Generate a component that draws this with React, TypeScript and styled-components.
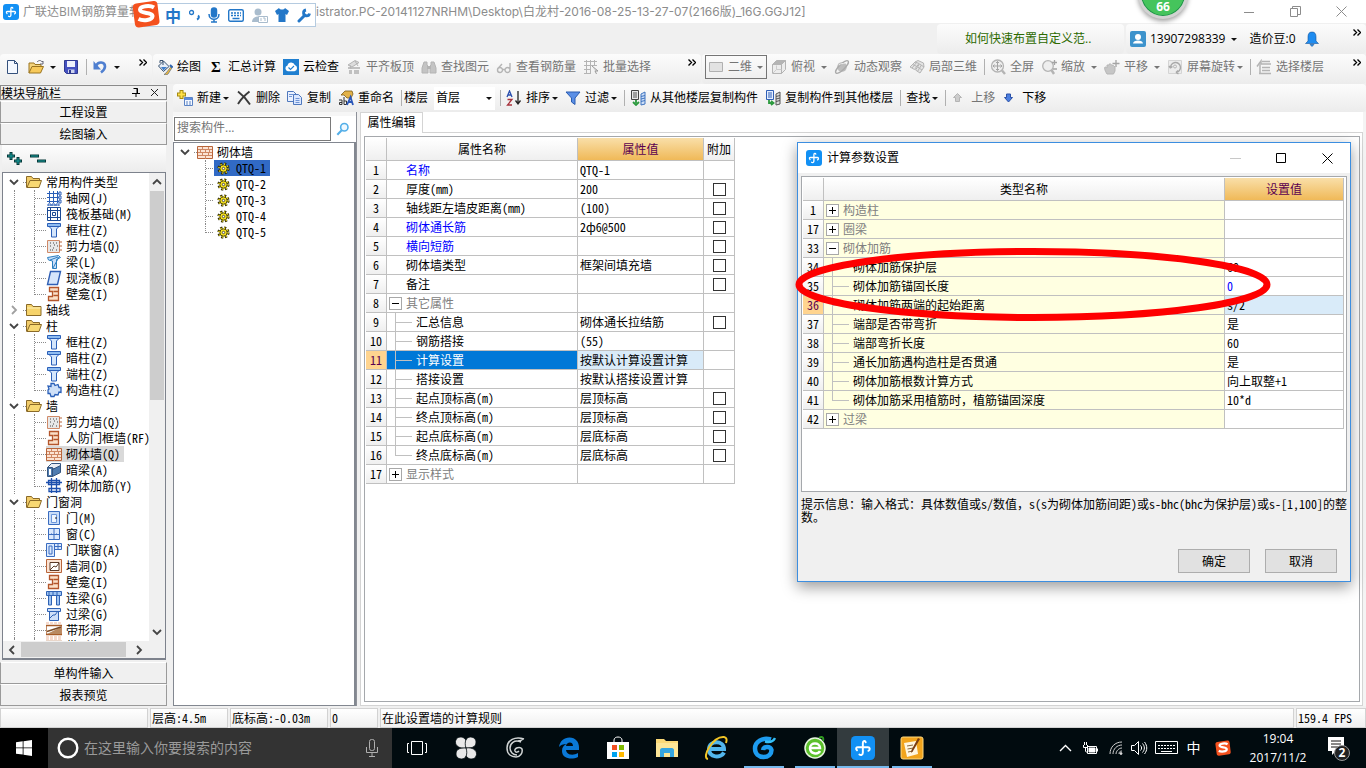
import React from 'react';
import styled, { createGlobalStyle, css } from 'styled-components';

const UI_FONT = '"Open Sans", "Noto Sans CJK SC", sans-serif';
const SONG_FONT = '"Noto Sans CJK SC", sans-serif';

const GlobalStyle = createGlobalStyle`
  *, *::before, *::after { box-sizing: border-box; }
  body { margin: 0; background: #f0f0f0; font-family: ${SONG_FONT}; font-size: 12px; line-height: 16px; color: #000; font-feature-settings: "hwid" 1; }
  button, input, select { font: inherit; font-feature-settings: inherit; color: inherit; margin: 0; padding: 0; border: 0; background: none; border-radius: 0; }
  svg { display: block; flex: none; }
`;

/* ---------- icons ---------- */

const Svg = ({ size = 16, children }: { size?: number; children: React.ReactNode }) => (
  <svg width={size} height={size} viewBox="0 0 16 16" fill="none" aria-hidden="true">{children}</svg>
);

const blueLine = '#2a5fb8';
const orange = '#b8653a';
const grey = '#b4b4b4';

const icons: Record<string, React.ReactNode> = {
  app: (
    <>
      <rect width="16" height="16" rx="3" fill="#1290f4" />
      <path d="M9.800 4.200C9.500 3 7.900 3 7.900 4.700v6.300c0 1.600-1.300 2-2.300 1.300M4 9.500C2.800 8.200 3.500 7.300 5 7.500h6c1.700-.2 2 1.700.6 2.400" stroke="#fff" strokeWidth="1.300" strokeLinecap="round" />
    </>
  ),
  newFile: (
    <>
      <path d="M2.500 1.500h7l3 3v10h-10z" fill="#f4f8ff" stroke="#34507c" />
      <path d="M9.500 1.500v3h3" stroke="#34507c" />
    </>
  ),
  open: (
    <>
      <path d="M1 14V4h5l1 1.500h6V8" fill="#f4d37c" stroke="#9a7420" />
      <path d="M1 14 4 7.500h11.500L12.500 14z" fill="#f7c95a" stroke="#9a7420" />
      <path d="M9 3c2-2 4-2 5 0l1-1v3h-3" stroke="#667" />
    </>
  ),
  save: (
    <>
      <path d="M1.500 1.500h13v13h-11l-2-2z" fill="#4450c0" stroke="#303a90" />
      <path d="M4 2h8v6H4z" fill="#eef0fb" />
      <path d="M5 10.500h6.500V14H5z" fill="#cdd3ee" />
      <path d="M6 11h2v3H6z" fill="#303a90" />
    </>
  ),
  undo: (
    <>
      <path d="M4 7c2-5 9-4.500 9 .5 0 3-2 4.500-4 6" stroke="#4f7fd0" strokeWidth="2.600" />
      <path d="M1.500 2v8.500H9z" fill="#4f7fd0" />
    </>
  ),
  paint: (
    <>
      <path d="m1.500 7 5-5 5.500 5.500-5.500 5z" fill="#e6eef8" stroke="#37506e" />
      <path d="M4 8h6l-3.500 3.500z" fill="#3f7fcc" />
      <path d="M3 4V1.500h3V6" stroke="#37506e" />
      <path d="m9 14 5.500-7 1 1L11 15c-1 1-3 1-4 .5z" fill="#efb93a" stroke="#5a6a80" strokeWidth=".7" />
      <path d="m13 6 2.500 2.500" stroke="#2b62b0" strokeWidth="2" />
    </>
  ),
  cloud: (
    <>
      <rect width="16" height="16" fill="#1f7fd0" />
      <path d="M4.800 12.200a3 3 0 0 1-.3-5.800A3.800 3.800 0 0 1 11.800 6a3.200 3.200 0 0 1-.3 6.200z" fill="#fff" />
      <path d="m5.500 8.500 2 2 3.500-3.500" stroke="#1f7fd0" strokeWidth="1.100" />
    </>
  ),
  slab: (
    <>
      <path d="m2 6 7-4.500 4 2L6 8z" fill="#ddd" stroke={grey} />
      <path d="M2 8h12v2H2zM3 11h3v4H3zM8 11h5v4H8z" fill="#c0c0c0" />
      <path d="m9 2 3 5M4 6l1 4" stroke={grey} />
    </>
  ),
  binoculars: (
    <>
      <path d="M3 3h3v3l1 1v7H1V9zM10 3h3l2 6v5H9V7l1-1z" fill="#c4c4c4" stroke={grey} />
      <path d="M6 7h4v3H6z" fill={grey} />
    </>
  ),
  glasses: (
    <path d="M1.500 11a2.500 2.500 0 1 0 5 0 2.500 2.500 0 1 0-5 0M9 11a2.500 2.500 0 1 0 5 0 2.500 2.500 0 1 0-5 0M6.500 10.500H9M1.500 10 6 5M14 10V4" stroke={grey} strokeWidth="1.400" />
  ),
  batch: (
    <>
      <path d="M1 2.500h13M1 6.500h13M1 10.500h7M1 14.500h7M3.500 1v14M7.500 1v14M11.500 1v6" stroke={grey} />
      <path d="m9 7 6 5h-3l1.500 3" fill="#ddd" stroke="#999" />
    </>
  ),
  flat: <path d="M1.500 3.500h13v9h-13z" fill="#e2e2e2" stroke="#b0b0b0" />,
  cube: (
    <>
      <path d="M1.500 5.500h9v9h-9zM10.500 5.500l4-4v9l-4 4z" fill="#ececec" stroke={grey} />
      <path d="M10.500 5.500h-9l4-4h9z" fill="#b4b4b4" stroke={grey} />
      <path d="M5.500 10.500v-4M5.500 10.500l-4 4M5.500 10.500h5" stroke="#ccc" />
    </>
  ),
  orbit: (
    <>
      <circle cx="8" cy="8" r="4.800" fill="#bdbdbd" />
      <ellipse cx="8" cy="8" rx="8.500" ry="2.800" transform="rotate(-45 8 8)" stroke="#aaa" strokeWidth="1.300" />
      <path d="M5 6c2-2 4-1 6-2" stroke="#eee" />
    </>
  ),
  local3d: (
    <>
      <path d="m1 8 5-5 4 1.500-4.500 6zM6.500 11l4-6 4.500 3-4 6zM6 3l3-1.500L14.500 4 15 8" fill="#e4e4e4" stroke={grey} />
      <path d="M3.500 5.500 8 7.500M8.500 8l4.500 3M8 3l-5 6M12.500 6l-4 6.500" stroke={grey} />
    </>
  ),
  fit: (
    <>
      <circle cx="7.500" cy="7" r="6" fill="#eee" stroke={grey} strokeWidth="1.300" />
      <path d="M7.500 2.500v9M3 7h9M6 4l1.500-1.500L9 4M6 10l1.500 1.500L9 10M4.500 5.500 3 7l1.500 1.500M10.500 5.500 12 7l-1.500 1.500" stroke="#a4a4a4" />
      <path d="m12 11.500 3 3.500" stroke={grey} strokeWidth="2.400" />
    </>
  ),
  zoom: (
    <>
      <circle cx="7" cy="7" r="5.300" fill="#eee" stroke={grey} strokeWidth="1.300" />
      <path d="m10.500 11 2.500 4" stroke={grey} strokeWidth="2.400" />
      <path d="M13.500 1v5M11 3.500h5M12 10h4" stroke="#a4a4a4" strokeWidth="1.300" />
    </>
  ),
  pan: (
    <>
      <path d="M3 15c-2-3-3-6-2-7 1 0 2 1 2 1V6h2l1-1.500 1.500 1.500 2 .5L11 8v4l-1.500 3z" fill="#c6c6c6" stroke="#b6b6b6" />
      <path d="M12 1v7M8.500 4.500h7" stroke="#a4a4a4" strokeWidth="1.300" />
    </>
  ),
  rotate: (
    <>
      <path d="M1.500 1.500h13v13h-13z" fill="#ececec" stroke="#d4d4d4" />
      <path d="M3.500 9a5 5 0 1 1 5.500 4.500M9 13.500l2-2M9 13.500l2.500 1.500M3.500 9 2 7M3.500 9l2-1.500" stroke="#a8a8a8" strokeWidth="1.400" />
      <circle cx="8" cy="7.500" r="1.500" stroke={grey} />
    </>
  ),
  floors: (
    <>
      <path d="M1 7.500 5 2v3h10M4 5.500V14" stroke={grey} strokeWidth="1.500" />
      <path d="M6 2.500h8M6 8.500h8M6 11.500h8M3 14.500h12" stroke={grey} strokeWidth="1.500" />
    </>
  ),
  create: (
    <>
      <path d="M4.500 0v9M0 4.500h9" stroke="#a58a10" strokeWidth="4" />
      <path d="M4.500 1v7M1 4.500h7" stroke="#ffe04a" strokeWidth="2" />
      <path d="M7.500 7.500h8v8h-8z" fill="#f4f8ff" stroke="#5b83c4" />
      <path d="M8 8h7v2H8z" fill="#5b8be0" />
      <path d="M9 12h2M12 12h2M9 14h2M12 14h2" stroke="#5b83c4" />
    </>
  ),
  remove: <path d="M2 1.500c4 3 8 7 12 13M13.500 1.500C9 5 5 9 2 14" stroke="#3a3a3a" strokeWidth="1.900" />,
  copy: (
    <>
      <path d="M.5 1.500h6l3 3v7h-9z" fill="#eaf1ff" stroke="#4f78bd" />
      <path d="M6.500 4.500h5l3 3v7h-8z" fill="#dbe7ff" stroke="#4f78bd" />
      <path d="M2 4.500h4M2 6.500h3M8.500 8.500h4M8.500 10.500h4M8.500 12.500h4" stroke="#6f94d4" />
    </>
  ),
  rename: (
    <>
      <path d="M3 5 7 1h7l1 3-2 4H9L6 5z" fill="#e2b24a" stroke="#7b5a18" strokeWidth=".8" />
      <path d="M1 10h3v4.500H1.500v-2H4M6 7v7.500h2.500V11H6" stroke="#333" />
      <path d="m9 15 3.500-8 2.500 8M10.500 12h4" stroke="#2a56b8" strokeWidth="1.800" />
    </>
  ),
  sort: (
    <>
      <path d="M1 7 3.500 1 6 7M2 5h3" stroke="#2a4fae" strokeWidth="1.300" />
      <path d="M1.500 9.500h4.500L1.500 15H6" stroke="#a8323c" strokeWidth="1.300" />
      <path d="M12 1v12M9.500 10.500 12 14l2.500-3.500" stroke="#222" strokeWidth="1.300" />
    </>
  ),
  filter: <path d="M1 2h14L10 8v6.500L6.500 12V8z" fill="#5b8fe6" stroke="#2a5cb0" />,
  fromFloor: (
    <>
      <path d="M1.500.5h7v9h-7z" fill="#e8e8e8" stroke="#444" />
      <path d="M3 3h4M3 5h4M3 7h4" stroke="#555" />
      <path d="M6 10v3M3 12l3 3 3-3" stroke="#2c9a3e" strokeWidth="1.800" />
      <path d="m11 4 4-2v12l-4 1zM11 6.500l4-1M11 9l4-1M11 11.500l4-1" fill="#cfe0f8" stroke="#3f74c0" />
    </>
  ),
  toFloor: (
    <>
      <path d="M1.500.5h7v9h-7z" fill="#e4eeff" stroke="#2f5fb5" />
      <path d="M3 3h4M3 5h4M3 7h4" stroke="#2f5fb5" />
      <path d="M4 10v3h4M6 11l2.500 2L6 15" stroke="#2c9a3e" strokeWidth="1.800" />
      <path d="m11 4 4-2v12l-4 1zM11 6.500l4-1M11 9l4-1M11 11.500l4-1" fill="#ddd" stroke="#555" />
    </>
  ),
  up: <path d="m6.500 3.500 4 4H8.500v4h-4v-4h-2z" fill="#ccc" stroke="#b4b4b4" />,
  down: <path d="m6.500 12 4-4.500H8.500V4h-4v3.500h-2z" fill="#4c7fe0" stroke="#2b51a8" />,
  user: (
    <>
      <rect width="16" height="16" rx="2" fill="#3d93cc" />
      <circle cx="8" cy="6" r="3" fill="#fff" />
      <path d="M3 12.500c0-4 10-4 10 0z" fill="#fff" />
    </>
  ),
  bell: <path d="M8 1c3 0 4 2 4 5v4l2.500 2.500h-13L4 10V6c0-3 1-5 4-5zM6 13.500h4L8 15.500z" fill="#1e8cf0" stroke="#16569c" strokeWidth=".6" />,
  folder: (
    <>
      <path d="M.5 13.500v-11h5l1.500 2h6.500V7" fill="#f2cc6a" stroke="#8a6a28" />
      <path d="M1 13.500 4 6.500h11.500L13 13.500z" fill="#f8d873" stroke="#8a6a28" />
    </>
  ),
  folderShut: (
    <>
      <path d="M.5 13.500v-11h5l1.500 2h8v9z" fill="#f6d36b" stroke="#8a6a28" />
      <path d="M1 6h13.500" stroke="#fdf0b8" />
    </>
  ),
  axis: <path d="M3.500 1v12M7.500 1v12M11.500 1v12M1 3.500h12M1 7.500h12M1 11.500h12M13 2h2v3h-2zM13 6h2v3h-2zM13 10h2v3h-2zM2 14h3v2H2zM6 14h3v2H6zM10 14h3v2h-3z" stroke={blueLine} />,
  raft: <path d="M1.500 1.500h13v13h-13zM4.500 4.500h7v7h-7zM4.500 1.500v13M11.500 1.500v13M1.500 4.500h13M1.500 11.500h13M6.500 6.500h3v3h-3z" stroke="#1c4a94" />,
  column: (
    <>
      <path d="M1.500 1.500h13v3h-13z" fill="#8fbcf0" stroke={blueLine} />
      <path d="M3 4.500h10L10.500 7v8h-5V7z" fill="#d4e6fc" stroke={blueLine} />
    </>
  ),
  shearWall: (
    <>
      <path d="M1.500 2.500h12v12h-12z" fill="#e8e8e8" stroke="#d08a68" />
      <path d="M4 12h1M7 10h1M10 12h1M4 8h1M8 7h1M11 8h1M4 5h1M6 12h1M10 5h1M7 5h1" stroke="#444" />
      <path d="M13 4h3M13 8h3M13 12h3" stroke={orange} />
    </>
  ),
  beam: (
    <>
      <path d="m1.500 3.500 11-2 2 2-4 2v9h-4V7l-4-1z" fill="#c9defa" stroke="#2b7fc0" />
      <path d="m7 14 6-11M4 6l8-3" stroke="#2b7fc0" />
    </>
  ),
  slabBlue: <path d="M4.500 1.500h10l-3 13h-10z" fill="#d6e6fb" stroke="#2f5fb5" strokeWidth="1.400" />,
  niche: <path d="M3.500 1.500h9v13h-10v-4h4v-5h-3zM7.500 5.500h5M7.500 9.500h5" fill="#fbe0c8" stroke="#b4562c" strokeWidth="1.300" />,
  structColumn: <path d="M5 1.500h3l1 2 3-1 1 3h2v5l-2-.5-1 3-3-.5-1 2H5l-1-3H2V8l1-1-1-3 3 .5z" fill="#cfe0f8" stroke={blueLine} strokeWidth="1.300" />,
  brick: (
    <>
      <path d="M.5 2.500h15v12H.5z" fill="#fbe3d3" stroke={orange} />
      <path d="M1 5.500h14M1 8.500h14M1 11.500h14M5.500 3v3M11.500 3v3M8.500 6v3M3.500 6v3M12.500 6v3M5.500 9v3M11.500 9v3M8.500 12v3" stroke="#cf8763" />
    </>
  ),
  hiddenBeam: (
    <>
      <path d="m1.500 5.500 4-4h9v3l-4 3z" fill="#e9eef5" stroke="#34557f" />
      <path d="M1.500 5.500h5v9h-5zM6.500 7.500l8-4v7l-8 4z" fill="#4f7cb0" stroke="#34557f" />
      <path d="M3 7h2v6H3z" fill="#fff" />
    </>
  ),
  rebar: <path d="M2.500 2.500h11v4h-11zM0 4.500h16M5.500 0v15M10.500 0v15M3 10.500h11v3H3z" stroke="#1c4fae" strokeWidth="1.300" />,
  door: (
    <>
      <path d="M2.500 1.500h11v13h-11z" fill="#c9ddf8" stroke="#3a6cc0" />
      <path d="M5.500 4.500h5v8h-5z" fill="#eef5ff" stroke="#6d97da" />
      <path d="M9 8h2" stroke="#222" />
    </>
  ),
  window: (
    <>
      <path d="M2.500 2.500h11v11h-11z" fill="#dbe9fd" stroke="#3a6cc0" />
      <path d="M8 2.500v11M2.500 8.500h11M5 8h1M10 8h1" stroke="#3a6cc0" />
    </>
  ),
  doorWindow: <path d="M.5 1.500h8v13h-8zM3 4h3v8H3zM8.500 1.500h7v6h-7zM12 1.500v6M8.500 4.500h7" fill="#dbe9fd" stroke="#3a6cc0" />,
  wallHole: (
    <>
      <path d="M.5 1.500h15v13H.5z" fill="#fbe3d3" stroke={orange} />
      <path d="M4 4.500h9v8H4z" fill="#fff" stroke="#5a3a28" />
      <path d="m4 12 4-4 2 1 3-4" stroke="#5a3a28" />
    </>
  ),
  linkBeam: <path d="M.5 1.500h15v4H.5zM2.500 6v9h3V6M10.500 6v9h3V6M3 1.500v4M7 1.500v4M11 1.500v4" fill="#9dc3f2" stroke="#2f62b4" />,
  lintel: <path d="M1.500 2.500h13v3h-13zM3.500 6v8.500h9V6M4 12l3-3 2 0 3-4" fill="#cfe0f8" stroke="#2f62b4" />,
  stripHole: (
    <>
      <path d="M0 3.500h16v9H0z" fill="#fff" stroke="#a85c28" strokeWidth="1.400" />
      <path d="M1 12 15 5v7z" fill="#b98a62" />
      <path d="M1 9.500 15 5" stroke="#7a4a24" strokeWidth="1.500" />
      <path d="M0 1h16M0 15h16" stroke="#ecb49a" strokeDasharray="3 1" />
    </>
  ),
  gear: (
    <>
      <circle cx="8" cy="8" r="5.500" stroke="#2e2900" strokeWidth="4" strokeDasharray="2.400 1.920" />
      <circle cx="8" cy="8" r="4.500" fill="#f6e21e" stroke="#2e2900" />
      <circle cx="8" cy="8" r="5.600" stroke="#f6e21e" strokeWidth="1.800" strokeDasharray="1.400 2.998" />
      <circle cx="8" cy="8" r="1.500" fill="#fff" stroke="#333" />
    </>
  ),
  search: (
    <>
      <circle cx="9.500" cy="6" r="4.200" fill="#eef8ff" stroke="#52aee8" strokeWidth="1.800" />
      <path d="m6.500 9.500-5 5" stroke="#52aee8" strokeWidth="2.400" />
    </>
  ),
};

const Icon = ({ name, size }: { name: string; size?: number }) => <Svg size={size}>{icons[name]}</Svg>;

const Caret = ({ color = '#111' }: { color?: string }) => (
  <svg width="6" height="3" viewBox="0 0 6 3" aria-hidden="true"><path d="M0 0h6L3 3z" fill={color} /></svg>
);

const Chevron = ({ dir = 'down', color = '#444' }: { dir?: 'down' | 'right' | 'up' | 'left'; color?: string }) => {
  const d = { down: 'M1 3l4 4 4-4', up: 'M1 7l4-4 4 4', right: 'M3 1l4 4-4 4', left: 'M7 1 3 5l4 4' }[dir];
  return <svg width="10" height="10" viewBox="0 0 10 10" fill="none" aria-hidden="true"><path d={d} stroke={color} strokeWidth="1.800" /></svg>;
};

/* Half-width Latin is on for the whole page; these signs keep their full em. */
const FullWidth = styled.span`font-feature-settings: normal;`;
const Song = ({ text }: { text: string }) => (
  <>{text.split(/([，ф])/).map((part, i) => (i % 2 ? <FullWidth key={i}>{part}</FullWidth> : part))}</>
);

/* ---------- window frame ---------- */

const Screen = styled.div`
  display: flex; flex-direction: column; height: 100vh; overflow: hidden; position: relative;
`;

const TitleBar = styled.header`
  display: flex; align-items: center; flex: none; height: 23px; padding: 0 2px 0 3px;
  background: #fff; font-family: ${UI_FONT}; color: #8c8c8c; white-space: nowrap;
`;
const TitleLead = styled.span`width: 290px; flex: none; padding-left: 4px; overflow: hidden;`;
const TitlePath = styled.span`flex: 1; font-family: Inter, "Noto Sans CJK SC", sans-serif;`;
const WindowButton = styled.button<{ $w?: number }>`
  width: ${p => p.$w ?? 46}px; height: 22px; display: flex; align-items: center; justify-content: center;
`;

const ImeBar = styled.div`
  position: absolute; z-index: 2; left: 144px; top: 3px; width: 172px; height: 24px; padding: 0 4px 0 20px;
  display: flex; align-items: center; justify-content: space-between;
  background: #fff; border: 1px solid #b5cbe0; color: #2377c8; font: bold 16px/20px ${SONG_FONT};
`;
const ImeLogo = styled.div`position: absolute; left: -13px; top: -4px;`;
const Ball = styled.div`
  position: absolute; z-index: 2; left: 1138px; top: -31px; width: 50px; height: 50px; border-radius: 50%;
  border: 3px solid #d2d2d2; background: #45c45c; box-shadow: inset 0 0 0 1px #1d8f4a, 0 2px 5px #0006;
  display: flex; align-items: flex-end; justify-content: center; padding-bottom: 2px;
  color: #fff; font: bold 12px/14px ${UI_FONT};
`;

/* ---------- toolbars ---------- */

const band = css`
  display: flex; align-items: center; background: linear-gradient(#fcfcfc, #ececec); border-radius: 4px; white-space: nowrap;
`;
const MenuRow = styled.div`display: flex; flex: none; justify-content: flex-end; gap: 2px; height: 31px; padding-top: 1px; font-family: ${UI_FONT};`;
const TipBand = styled.div`${band} width: 187px; padding-left: 28px;`;
const TipLink = styled.a`color: #2d6a00; text-decoration: none;`;
const AccountBand = styled.div`${band} width: 240px; padding: 0 5px 0 4px; gap: 12px;`;
const PlainButton = styled.button<{ $gap?: number }>`display: flex; align-items: center; gap: ${p => p.$gap ?? 4}px; white-space: nowrap;`;
const ToolRow = styled.div`display: flex; flex: none; gap: 1px; height: 30px; font-family: ${UI_FONT};`;
const Band = styled.div<{ $w?: number; $left: number }>`
  ${band} ${p => (p.$w ? `width: ${p.$w}px;` : 'flex: 1;')} padding: 0 5px 4px ${p => p.$left}px;
`;
const EditBar = styled.div`${band} flex: none; height: 28px; padding-left: 4px; font-family: ${UI_FONT};`;
const ToolButton = styled.button<{ $off?: boolean }>`
  display: flex; align-items: center; gap: 4px; padding-right: 7px; white-space: nowrap; color: ${p => (p.$off ? '#757575' : '#000')};
`;
const CaretSlot = styled.span<{ $wide?: boolean }>`margin-left: ${p => (p.$wide ? 2 : -2)}px;`;
const Rule = styled.span`width: 1px; height: 16px; margin-right: 5px; background: #b0b0b0;`;
const MoreButton = styled.button`align-self: flex-start; margin-left: auto; padding-top: 5px;`;
const Sigma = styled.span`width: 16px; text-align: center; font: bold 15px/16px "Liberation Serif", serif;`;
const ViewPicker = styled.label`
  display: flex; align-items: center; gap: 4px; width: 62px; height: 24px; margin-right: 4px; padding: 0 3px 0 2px;
  border: 1px solid #757575; color: #757575;
`;
const FloorLabel = styled.span`border-left: 1px solid #b0b0b0; padding-left: 2px;`;
const FloorPicker = styled.label`
  display: flex; align-items: center; width: 61px; height: 23px; margin: 0 5px 0 6px; padding: 0 3px 0 2px; background: #fff;
`;
const BareSelect = styled.select`appearance: none; flex: 1; width: 20px; outline: none;`;

const More = () => (
  <MoreButton aria-label="更多">
    <svg width="8" height="7" fill="none" stroke="#000"><path d="m.5.5 3 3-3 3M4.500.5l3 3-3 3" strokeWidth="1.400" /></svg>
  </MoreButton>
);

type ToolProps = { icon?: string; sigma?: boolean; label?: string; off?: boolean; drop?: 'menu' | 'split' };
const Tool = ({ icon, sigma, label, off, drop }: ToolProps) => (
  <ToolButton $off={off} aria-label={label ?? icon}>
    {sigma && <Sigma>Σ</Sigma>}
    {icon && <Icon name={icon} />}
    {label && <span>{label}</span>}
    {drop && <CaretSlot $wide={drop === 'split'}><Caret color={off ? '#757575' : '#111'} /></CaretSlot>}
  </ToolButton>
);

/* ---------- main area ---------- */

const Main = styled.div`display: flex; flex: 1; min-height: 0; gap: 5px;`;
const Sidebar = styled.aside`display: flex; flex-direction: column; width: 167px; flex: none; padding: 1px 0 2px;`;
const DockTitle = styled.div`
  display: flex; align-items: center; height: 15px; margin-bottom: 1px; padding-right: 3px; border: 1px solid #8a8a8a;
  & > span { flex: 1; }
`;
const NavButton = styled.button`height: 22px; flex: none; background: #f0f0f0; border: 1px solid #9a9a9a; border-top-color: #fff; text-align: center;`;
const TreeTools = styled.div`
  display: flex; gap: 6px; align-items: center; flex: none; height: 27px; margin: 0 1px 0 2px; padding-left: 4px;
  background: linear-gradient(#fdfdfd, #ececec);
`;
const TreeFrame = styled.div`
  display: flex; flex-direction: column; flex: 1; min-height: 0; margin: 0 1px 2px 2px; background: #fff; border: 1px solid #7d828c;
  border-bottom-width: 2px;
`;
const TreeBody = styled.div`display: flex; flex: 1; min-height: 0;`;
const TreeList = styled.ul`flex: 1; min-width: 0; margin: 0; padding: 1px 0 0; list-style: none; overflow: hidden;`;
const TreeRow = styled.li`display: flex; align-items: center; height: 16px; white-space: nowrap;`;
const Twisty = styled.button`width: 20px; padding-left: 6px; height: 16px;`;
const dot = '#8a8a8a';
const GroupDash = styled.span`width: 3px; border-top: 1px dotted ${dot};`;
const GroupLabel = styled.span`padding-left: 4px;`;
const Rails = styled.span<{ $end?: boolean }>`
  display: flex; flex: none; align-self: stretch; width: 43px;
  &::before { content: ""; width: 20px; margin-left: 11px; border-left: 1px dotted ${dot}; }
  &::after { content: ""; flex: 1; height: ${p => (p.$end ? 9 : 16)}px; border-left: 1px dotted ${dot};
    background: repeating-linear-gradient(90deg, ${dot} 0 1px, transparent 1px 2px) 0 8px / 100% 1px no-repeat; }
`;
const LeafLabel = styled.span<{ $on?: boolean }>`
  display: flex; align-items: center; gap: 4px; height: 16px; padding-right: 4px; background: ${p => (p.$on ? '#d9d9d9' : 'none')};
`;
const ScrollTrack = styled.div<{ $v?: boolean }>`
  display: flex; flex: none; align-items: center; background: #f0f0f0; flex-direction: ${p => (p.$v ? 'column' : 'row')};
  ${p => (p.$v ? 'width: 16px; padding: 4px 0;' : 'height: 17px; padding: 0 18px 0 4px;')}
`;
const ScrollThumb = styled.div<{ $v?: boolean }>`
  background: #cdcdcd; ${p => (p.$v ? 'width: 14px; height: 209px; margin-top: 4px;' : 'height: 15px; width: 105px; margin: 0 8px 0 4px;')}
`;
const Spacer = styled.span`flex: 1;`;

type Group = { name: string; shut?: boolean; items: [string, string][] };
const groups: Group[] = [
  { name: '常用构件类型', items: [['axis', '轴网(J)'], ['raft', '筏板基础(M)'], ['column', '框柱(Z)'], ['shearWall', '剪力墙(Q)'], ['beam', '梁(L)'], ['slabBlue', '现浇板(B)'], ['niche', '壁龛(I)']] },
  { name: '轴线', shut: true, items: [] },
  { name: '柱', items: [['column', '框柱(Z)'], ['column', '暗柱(Z)'], ['column', '端柱(Z)'], ['structColumn', '构造柱(Z)']] },
  { name: '墙', items: [['shearWall', '剪力墙(Q)'], ['niche', '人防门框墙(RF)'], ['brick', '砌体墙(Q)'], ['hiddenBeam', '暗梁(A)'], ['rebar', '砌体加筋(Y)']] },
  { name: '门窗洞', items: [['door', '门(M)'], ['window', '窗(C)'], ['doorWindow', '门联窗(A)'], ['wallHole', '墙洞(D)'], ['niche', '壁龛(I)'], ['linkBeam', '连梁(G)'], ['lintel', '过梁(G)'], ['stripHole', '带形洞'], ['stripHole', '带形窗']] },
];

const Work = styled.div`display: flex; flex-direction: column; flex: 1; min-width: 0; padding: 0 0 2px 1px;`;
const Panes = styled.div`display: flex; flex: 1; min-height: 0; gap: 3px;`;
const ComponentPane = styled.section`display: flex; flex-direction: column; flex: none; width: 184px; padding-top: 4px; border-right: 1px solid #8d9098; background: #f6f6f6;`;
const SearchRow = styled.div`display: flex; height: 26px; background: #fff; padding: 1px;`;
const SearchBox = styled.input`
  width: 157px; height: 24px; padding: 0 2px 4px; border: 1px solid #7a7a7a; background: #fff;
  font-family: ${UI_FONT}; outline: none;
  &::placeholder { color: #757575; opacity: 1; }
`;
const SearchButton = styled.button`display: flex; flex: 1; align-items: center; justify-content: center;`;
const ComponentTree = styled.ul`flex: 1; margin: 0; padding: 1px 0 0; list-style: none; background: #fff; border: 1px solid #828790; border-right-width: 2px;`;
const ComponentRails = styled.span<{ $end?: boolean }>`
  flex: none; align-self: flex-start; width: 9px; margin-left: 31px; height: ${p => (p.$end ? 9 : 16)}px; border-left: 1px dotted ${dot};
  background: repeating-linear-gradient(90deg, ${dot} 0 1px, transparent 1px 2px) 0 8px / 100% 1px no-repeat;
`;
const ComponentName = styled.span<{ $on?: boolean }>`
  display: flex; align-items: center; gap: 6px; height: 16px; padding: 0 4px 0 3px; background: ${p => (p.$on ? '#316ac5' : 'none')};
`;

const EditorPane = styled.section`display: flex; flex-direction: column; flex: 1; min-width: 0; padding-right: 3px; background: #f4f4f4;`;
const TabStrip = styled.div`display: flex; height: 21px; flex: none; background: #fff;
  &::after { content: ""; flex: 1; border-bottom: 1px solid #d4d4d4; }`;
const Tab = styled.button`width: 63px; border: 1px solid #d4d4d4; border-bottom: 0; background: #fff; font-family: ${UI_FONT};`;
const EditorBody = styled.div`display: flex; flex: 1; min-height: 0; padding: 3px 2px 3px 3px; background: #fff; border: 1px solid #d4d4d4; border-top: 0;`;
const GridFrame = styled.div`flex: 1; padding: 1px; background: #fff; border: 1px solid #a5a8ac;`;

/* ---------- property grids ---------- */

const Grid = styled.table<{ $w?: number }>`
  table-layout: fixed; border-collapse: separate; border-spacing: 0; width: ${p => (p.$w ? `${p.$w}px` : '100%')};
  th, td { height: 19px; padding: 0; border: solid #c0c0c0; border-width: 0 1px 1px 0; font-weight: normal; text-align: left; white-space: nowrap; line-height: 16px; overflow: hidden; }
  thead th { height: 23px; text-align: center; background: linear-gradient(#fff, #efefef); }
`;
const HotHead = styled.th`&&& { background: linear-gradient(#f9dfa9, #f0b958); color: #5a0050; }`;
const RowNo = styled.th<{ $on?: boolean }>`
  && { text-align: center; background: ${p => (p.$on ? '#ffd48f' : 'linear-gradient(#fff, #efefef)')}; color: ${p => (p.$on ? '#5a0050' : '#000')}; }
`;
const NameTd = styled.td<{ $bg?: string; $fg?: string }>`background: ${p => p.$bg ?? '#fff'}; color: ${p => p.$fg ?? '#000'};`;
const NameLine = styled.div<{ $pad: number }>`display: flex; align-items: center; gap: 4px; height: 18px; padding-left: ${p => p.$pad}px;`;
const ValueTd = styled.td<{ $on?: boolean; $fg?: string }>`
  && { padding-left: 2px; } background: ${p => (p.$on ? '#d9ebf9' : '#fff')}; color: ${p => p.$fg ?? '#000'};
`;
const Branch = styled.span<{ $end?: boolean }>`
  width: 17px; height: 18px;
  background: linear-gradient(#c0c0c0, #c0c0c0) 0 0 / 1px ${p => (p.$end ? '9px' : '100%')} no-repeat,
    linear-gradient(#c0c0c0, #c0c0c0) 0 9px / 100% 1px no-repeat;
`;
const Expander = styled.button`
  width: 13px; height: 13px; border: 1px solid #a8a8a8; background: #fff; display: flex; align-items: center; justify-content: center;
`;
const Check = styled.input`
  appearance: none; display: block; width: 13px; height: 13px; margin: 0 auto; border: 1px solid #333; background: #fff;
`;

const ToggleBox = ({ open, label }: { open: boolean; label: string }) => (
  <Expander aria-label={label}>
    <svg width="9" height="9" viewBox="0 0 9 9" aria-hidden="true"><path d={open ? 'M1 4.500h7' : 'M1 4.500h7M4.500 1v7'} stroke="#000" /></svg>
  </Expander>
);

type Kind = 'top' | 'open' | 'shut' | 'child' | 'last';
const NameCell = ({ kind, text, bg, fg }: { kind: Kind; text: string; bg?: string; fg?: string }) => {
  const header = kind === 'open' || kind === 'shut';
  const child = kind === 'child' || kind === 'last';
  return (
    <NameTd $bg={bg} $fg={header ? '#808080' : fg}>
      <NameLine $pad={header ? 2 : child ? 8 : 19}>
        {header && <ToggleBox open={kind === 'open'} label={text} />}
        {child && <Branch $end={kind === 'last'} />}
        <span><Song text={text} /></span>
      </NameLine>
    </NameTd>
  );
};

type Prop = { kind: Kind; name: string; value?: string; check?: boolean; blue?: boolean };
const props: Prop[] = [
  { kind: 'top', name: '名称', value: 'QTQ-1', blue: true },
  { kind: 'top', name: '厚度(mm)', value: '200', check: true },
  { kind: 'top', name: '轴线距左墙皮距离(mm)', value: '(100)', check: true },
  { kind: 'top', name: '砌体通长筋', value: '2ф6@500', check: true, blue: true },
  { kind: 'top', name: '横向短筋', check: true, blue: true },
  { kind: 'top', name: '砌体墙类型', value: '框架间填充墙', check: true },
  { kind: 'top', name: '备注', check: true },
  { kind: 'open', name: '其它属性' },
  { kind: 'child', name: '汇总信息', value: '砌体通长拉结筋', check: true },
  { kind: 'child', name: '钢筋搭接', value: '(55)' },
  { kind: 'child', name: '计算设置', value: '按默认计算设置计算' },
  { kind: 'child', name: '搭接设置', value: '按默认搭接设置计算' },
  { kind: 'child', name: '起点顶标高(m)', value: '层顶标高', check: true },
  { kind: 'child', name: '终点顶标高(m)', value: '层顶标高', check: true },
  { kind: 'child', name: '起点底标高(m)', value: '层底标高', check: true },
  { kind: 'last', name: '终点底标高(m)', value: '层底标高', check: true },
  { kind: 'shut', name: '显示样式' },
];

const PropertyGrid = () => (
  <Grid $w={369}>
    <colgroup><col style={{ width: 21 }} /><col style={{ width: 191 }} /><col style={{ width: 126 }} /><col style={{ width: 31 }} /></colgroup>
    <thead><tr><th /><th>属性名称</th><HotHead>属性值</HotHead><th>附加</th></tr></thead>
    <tbody>
      {props.map((p, i) => {
        const on = i === 10;
        return (
          <tr key={i}>
            <RowNo $on={on} scope="row">{i + 1}</RowNo>
            <NameCell kind={p.kind} text={p.name} bg={on ? '#0078d7' : undefined} fg={on ? '#fff' : p.blue ? '#0000ff' : undefined} />
            <ValueTd $on={on}><Song text={p.value ?? ''} /></ValueTd>
            <td>{p.check && <Check type="checkbox" aria-label={p.name} />}</td>
          </tr>
        );
      })}
    </tbody>
  </Grid>
);

/* ---------- dialog ---------- */

const Dialog = styled.section`
  position: absolute; z-index: 3; left: 797px; top: 142px; width: 554px; height: 440px; display: flex; flex-direction: column;
  background: #f0f0f0; border: 1px solid #3c8ee0; box-shadow: 0 5px 14px #0006;
`;
const DialogTitle = styled.header`
  display: flex; align-items: center; gap: 5px; height: 30px; padding-left: 8px; background: #fff; font-family: ${UI_FONT};
  & > h1 { flex: 1; margin: 0; font: inherit; }
`;
const DialogControls = styled.div`display: flex;`;
const DialogGrid = styled.div`flex: 1; margin: 3px 3px 0; padding: 1px 2px 0 1px; background: #fff; border: 1px solid #a5a8ac;`;
const Hint = styled.p`margin: 5px 0 24px 3px; height: 28px; line-height: 13px;`;
const DialogActions = styled.footer`display: flex; justify-content: flex-end; gap: 15px; padding: 0 13px 8px 0;`;
const PushButton = styled.button`width: 72px; height: 24px; border: 1px solid #adadad; background: #e1e1e1;`;
const RedRing = styled.svg`position: absolute; z-index: 4; left: 795px; top: 247px; pointer-events: none;`;

type Setting = { no: number; kind: Kind; name: string; value?: string };
const settings: Setting[] = [
  { no: 1, kind: 'shut', name: '构造柱' },
  { no: 17, kind: 'shut', name: '圈梁' },
  { no: 33, kind: 'open', name: '砌体加筋' },
  { no: 34, kind: 'child', name: '砌体加筋保护层', value: '60' },
  { no: 35, kind: 'child', name: '砌体加筋锚固长度', value: '0' },
  { no: 36, kind: 'child', name: '砌体加筋两端的起始距离', value: 's/2' },
  { no: 37, kind: 'child', name: '端部是否带弯折', value: '是' },
  { no: 38, kind: 'child', name: '端部弯折长度', value: '60' },
  { no: 39, kind: 'child', name: '通长加筋遇构造柱是否贯通', value: '是' },
  { no: 40, kind: 'child', name: '砌体加筋根数计算方式', value: '向上取整+1' },
  { no: 41, kind: 'last', name: '砌体加筋采用植筋时，植筋锚固深度', value: '10*d' },
  { no: 42, kind: 'shut', name: '过梁' },
];

const SettingsDialog = () => (
  <Dialog role="dialog" aria-label="计算参数设置">
    <DialogTitle>
      <Icon name="app" />
      <h1>计算参数设置</h1>
      <DialogControls>
        <WindowButton aria-label="最小化"><svg width="11" height="11"><path d="M0 5.500h11" stroke="#c8c8c8" /></svg></WindowButton>
        <WindowButton aria-label="最大化"><svg width="11" height="11" fill="none"><path d="M.5.5h9v9h-9z" stroke="#000" /></svg></WindowButton>
        <WindowButton aria-label="关闭"><svg width="11" height="11"><path d="m.5.5 10 10M10.500.5l-10 10" stroke="#000" /></svg></WindowButton>
      </DialogControls>
    </DialogTitle>
    <DialogGrid>
      <Grid>
        <colgroup><col style={{ width: 21 }} /><col /><col style={{ width: 119 }} /></colgroup>
        <thead><tr><th /><th>类型名称</th><HotHead>设置值</HotHead></tr></thead>
        <tbody>
          {settings.map(s => (
            <tr key={s.no}>
              <RowNo $on={s.no === 36} scope="row">{s.no}</RowNo>
              <NameCell kind={s.kind} text={s.name} bg="#ffffe1" />
              <ValueTd $on={s.no === 36} $fg={s.no === 35 ? '#0000ff' : undefined}>{s.value}</ValueTd>
            </tr>
          ))}
        </tbody>
      </Grid>
    </DialogGrid>
    <Hint><Song text="提示信息：输入格式：具体数值或s/数值，s(s为砌体加筋间距)或s-bhc(bhc为保护层)或s-[1,100]的整数。" /></Hint>
    <DialogActions><PushButton>确定</PushButton><PushButton>取消</PushButton></DialogActions>
  </Dialog>
);

/* ---------- status bar and taskbar ---------- */

const StatusBar = styled.footer`display: flex; flex: none; gap: 2px; height: 20px; background: #f0f0f0; white-space: nowrap;`;
const StatusCell = styled.div<{ $w?: number }>`
  ${p => (p.$w ? `width: ${p.$w}px;` : 'flex: 1;')} padding-left: 1px; line-height: 18px; border: 1px solid #d2d2d2; background: linear-gradient(#fff, #f0f0f0);
`;

const Taskbar = styled.nav`display: flex; flex: none; height: 40px; background: #010b0f; color: #fff; font-family: ${UI_FONT};`;
const StartButton = styled.button`width: 48px; display: flex; align-items: center; justify-content: center; background: #000;`;
const TaskSearch = styled.label`display: flex; align-items: center; gap: 5px; width: 344px; padding: 0 13px 0 9px; background: #333;`;
const TaskSearchInput = styled.input`
  flex: 1; min-width: 0; font-size: 14px; outline: none;
  &::placeholder { color: #9a9a9a; opacity: 1; }
`;
const TaskButton = styled.button<{ $state?: 'run' | 'on'; $w?: number }>`
  display: flex; align-items: center; justify-content: center; width: ${p => p.$w ?? 49}px; height: 40px;
  background: ${p => (p.$state === 'on' ? '#333b3e' : 'none')};
  background-image: ${p => (p.$state ? 'linear-gradient(#76b9ed, #76b9ed)' : 'none')};
  background-size: ${p => (p.$state === 'on' ? '100%' : '40px')} 2px; background-repeat: no-repeat; background-position: bottom center;
`;
const Tray = styled.div`display: flex; align-items: center; margin-left: auto; padding-right: 7px;`;
const TrayButton = styled.button<{ $w?: number }>`width: ${p => p.$w ?? 25}px; height: 40px; display: flex; align-items: center; justify-content: center; font-size: 14px;`;
const Clock = styled.time`width: 78px; text-align: center; line-height: 19px; white-space: nowrap;`;

const SogouLogo = ({ size }: { size: number }) => (
  <svg width={size} height={size} viewBox="0 0 28 28" fill="none" aria-hidden="true">
    <path d="M4 3.500 21.500 1c2-.3 3.500.7 3.900 2.700L27.500 21c.2 2-1 3.500-3 3.900L7 27.500c-2 .2-3.600-1-4-3L.7 7.500C.5 5.300 2 3.800 4 3.500z" fill="#f4511e" />
    <path d="M22 7.500c-4-2.500-14-1.500-14 2.300 0 4.400 13 2 12.500 6.500-.4 4-9 5-14 2.700" stroke="#fff" strokeWidth="4" />
  </svg>
);

const taskIcons: Record<string, React.ReactNode> = {
  view: <svg width="22" height="16" fill="none" stroke="#fff"><path d="M5.500 1.500h11v13h-11zM3 3.500H1.500v9H3M19 3.500h1.500v9H19" /></svg>,
  pinwheel: (
    <svg width="22" height="24" viewBox="0 0 22 24" fill="#e9e9e9" stroke="#010b0f" strokeWidth=".8">
      <path d="M11 12C5 13 0 10 .5 5.500 1 1 6 0 9 2c3 2 2.500 6 2 10z" />
      <path d="M11 12C9 6 11 1 15.500 1S22 5 20.500 8.500 15 12 11 12z" />
      <path d="M11 12c6-1 11 2 10.500 6.500C21 23 16 24 13 22s-2.500-6-2-10z" />
      <path d="M11 12c2 6 0 11-4.500 11S0 19 1.500 15.500 7 12 11 12z" />
    </svg>
  ),
  swirl: <svg width="20" height="22" viewBox="0 0 20 22" fill="none" stroke="#d0d4d4" strokeWidth="1.500"><path d="M19 2c-9-3-17 1-17 9 0 6 4 9 9 9 4 0 7-4 6-8-2-3-8-1-7 2 1 2 3 1 4 0M16 5C9 2 5 7 5 11c0 4 3 7 7 7M18 2c-1 1-3 2-5 2" /></svg>,
  edge: <svg width="22" height="22" viewBox="0 0 22 22" fill="#0a78d6"><path d="M1 10C2 4 6 .5 11.500.5 17.500.5 21 5 21 10v3H8c.5 5 7 6 12 3v4c-6 3-16 2-16-6 0-4 2-6 4.500-7C5 7 2.500 8 1 10zm7-1h7c0-5-6.500-4.500-7 0z" /></svg>,
  store: (
    <svg width="24" height="24" viewBox="0 0 24 24">
      <path d="M8 7V4c0-4 8-4 8 0v3" fill="none" stroke="#fff" /><path d="M1 6h22v17H1z" fill="#fff" />
      <path d="M6 9h5v5H6z" fill="#f25022" /><path d="M13 9h5v5h-5z" fill="#7fba00" /><path d="M6 16h5v5H6z" fill="#00a4ef" /><path d="M13 16h5v5h-5z" fill="#ffb900" />
    </svg>
  ),
  explorer: (
    <svg width="22" height="20" viewBox="0 0 22 20">
      <path d="M0 1h8l2 2h12v16H0z" fill="#fbd977" /><path d="M0 5h22v14H0z" fill="#fde697" /><path d="M4 19v-7c0-1 1-2 2-2h10c1 0 2 1 2 2v7h-4v-4H8v4z" fill="#35a5e0" />
    </svg>
  ),
  ie: (
    <svg width="26" height="26" viewBox="0 0 26 26" fill="none">
      <path d="M21 17.500c-3 6-15 5.500-15-3.500S21 5 21 14H8" stroke="#52b6ec" strokeWidth="4" />
      <path d="M5 24C-2 23 10 1 21 2c3 .5 3 3 2 6" stroke="#f2c526" strokeWidth="2" />
    </svg>
  ),
  blueG: <svg width="24" height="24" viewBox="0 0 24 24" fill="none"><path d="M19 3.500C10 1 3 6 3 12.500 3 18 7 21 11.500 21c5 0 8-3 8-7-1-4-8-4-8.500 0" stroke="#1d9cf0" strokeWidth="4.500" /><path d="M23 2c-2 4-6 4.500-10 3.500" stroke="#35c0f8" strokeWidth="2.500" /></svg>,
  greenE: (
    <svg width="22" height="24" viewBox="0 0 22 24" fill="none">
      <circle cx="11" cy="12" r="10" fill="#5cc02c" stroke="#e8f6e0" strokeWidth="1.500" />
      <path d="M16 15c-2 4-10 3-10-3s10-6 10 0H7" stroke="#fff" strokeWidth="2.500" /><path d="M15 2c3-2 5-1 4 3" stroke="#2f9a20" strokeWidth="2" />
    </svg>
  ),
  notes: (
    <svg width="24" height="24" viewBox="0 0 24 24" fill="none">
      <rect x="1" y="1" width="22" height="22" rx="2" fill="#f2a41c" stroke="#ffd980" /><path d="m4 7 12-2 2 13-11 3z" fill="#fff6e0" />
      <path d="m7 10 6-1M7.500 13l6-1M8 16l5-1" stroke="#8a6a40" /><path d="m20 3-7 12-2 2 .5-3L18 2z" fill="#7a3d12" />
    </svg>
  ),
};

export default function App() {
  return (
    <Screen>
      <GlobalStyle />
      <TitleBar>
        <Icon name="app" />
        <TitleLead>广联达BIM钢筋算量软件</TitleLead>
        <TitlePath>nistrator.PC-20141127NRHM\Desktop\白龙村-2016-08-25-13-27-07(2166版)_16G.GGJ12]</TitlePath>
        <WindowButton aria-label="最小化"><svg width="11" height="11"><path d="M0 6.500h10" stroke="#8c8c8c" /></svg></WindowButton>
        <WindowButton aria-label="还原"><svg width="11" height="11" fill="none" stroke="#8c8c8c"><path d="M.5 2.500h7v8h-7zM2.500 2V.5h8v8H8" /></svg></WindowButton>
        <WindowButton aria-label="关闭"><svg width="11" height="11"><path d="m.5.5 10 10M10.500.5l-10 10" stroke="#8c8c8c" /></svg></WindowButton>
      </TitleBar>
      <ImeBar>
        <ImeLogo><SogouLogo size={28} /></ImeLogo>
        <span>中</span>
        <svg width="12" height="12" fill="none" stroke="#2377c8"><circle cx="2.500" cy="3.500" r="2" strokeWidth="1.300" /><path d="M9 6.500c1.500 1 1 3-1 4" strokeWidth="2" /></svg>
        <svg width="12" height="16" fill="none" stroke="#2377c8" strokeWidth="1.500"><rect x="3.500" y="1" width="5" height="9" rx="2.500" fill="#2377c8" /><path d="M1 7c0 7 10 7 10 0M6 12v3M3 15h6" /></svg>
        <svg width="16" height="13" fill="none" stroke="#2377c8"><rect x=".7" y=".7" width="14.600" height="11.600" rx="1.500" strokeWidth="1.400" /><path d="M3 4h10M3 6.500h10" strokeDasharray="2 1" strokeWidth="1.500" /><path d="M4.500 9.500h7" strokeWidth="1.500" /></svg>
        <svg width="16" height="15" fill="#a9bccd"><circle cx="6" cy="4" r="3.500" /><path d="M0 14c0-7 11-7 12-2v2z" /><path d="M6.500 8.500h9v6h-9z" fill="#fff" stroke="#a9bccd" /><path d="M9 10v3M11 10h2v3" stroke="#a9bccd" fill="none" /></svg>
        <svg width="14" height="14" fill="#2377c8"><path d="M4 0c1 2 5 2 6 0l4 3-2 4-1.500-1v8h-7V6L2 7 0 3z" /></svg>
        <svg width="14" height="15" fill="none"><path d="m2 13 6-6" stroke="#2377c8" strokeWidth="3" strokeLinecap="round" /><path d="M12.500 5.500A3 3 0 1 1 9 2" stroke="#2377c8" strokeWidth="2.800" /></svg>
      </ImeBar>
      <Ball>66</Ball>

      <MenuRow>
        <TipBand><TipLink href="#tips">如何快速布置自定义范..</TipLink></TipBand>
        <AccountBand>
          <PlainButton><Icon name="user" />13907298339<CaretSlot $wide><Caret /></CaretSlot></PlainButton>
          <PlainButton $gap={8}><span>造价豆:0</span><Icon name="bell" /></PlainButton>
          <More />
        </AccountBand>
      </MenuRow>

      <ToolRow>
        <Band $w={152} $left={5}>
          <Tool icon="newFile" /><Tool icon="open" drop="split" /><Tool icon="save" /><Rule /><Tool icon="undo" drop="split" />
          <More />
        </Band>
        <Band $w={548} $left={4}>
          <Tool icon="paint" label="绘图" /><Tool sigma label="汇总计算" /><Tool icon="cloud" label="云检查" />
          <Tool icon="slab" label="平齐板顶" off /><Tool icon="binoculars" label="查找图元" off />
          <Tool icon="glasses" label="查看钢筋量" off /><Tool icon="batch" label="批量选择" off />
          <More />
        </Band>
        <Band $left={3}>
          <ViewPicker><Icon name="flat" /><BareSelect aria-label="视图"><option>二维</option></BareSelect><Caret color="#757575" /></ViewPicker>
          <Tool icon="cube" label="俯视" off drop="split" /><Tool icon="orbit" label="动态观察" off /><Tool icon="local3d" label="局部三维" off /><Rule />
          <Tool icon="fit" label="全屏" off /><Tool icon="zoom" label="缩放" off drop="split" /><Tool icon="pan" label="平移" off drop="split" />
          <Tool icon="rotate" label="屏幕旋转" off drop="menu" /><Rule /><Tool icon="floors" label="选择楼层" off />
          <More />
        </Band>
      </ToolRow>

      <Main>
        <Sidebar>
          <DockTitle>
            <span>模块导航栏</span>
            <WindowButton $w={18} aria-label="固定"><svg width="8" height="9" fill="none" stroke="#000"><path d="M1.500.5h4v5M0 5.500h8M4 6v3M5 .5v5" /></svg></WindowButton>
            <WindowButton $w={18} aria-label="关闭"><svg width="9" height="9" stroke="#222"><path d="m1 1 7 7M8 1 1 8" /></svg></WindowButton>
          </DockTitle>
          <NavButton>工程设置</NavButton>
          <NavButton>绘图输入</NavButton>
          <TreeTools>
            <PlainButton aria-label="全部展开"><svg width="18" height="16" fill="none"><path d="M5 1v8M1 5h8M12 6v8M8 10h8" stroke="#063838" strokeWidth="3" /><path d="M5 2v6M2 5h6M12 7v6M9 10h6" stroke="#16a0a0" /></svg></PlainButton>
            <PlainButton aria-label="全部折叠"><svg width="18" height="16" fill="none"><path d="M0 5h9M7 10h9" stroke="#063838" strokeWidth="3" /><path d="M1 5h7M8 10h7" stroke="#16a0a0" /></svg></PlainButton>
          </TreeTools>
          <TreeFrame>
            <TreeBody>
              <TreeList>
                {groups.map((g, gi) => (
                  <React.Fragment key={g.name}>
                    <TreeRow>
                      <Twisty aria-label={g.name}><Chevron dir={g.shut ? 'right' : 'down'} color={g.shut ? '#a0a0a0' : '#444'} /></Twisty>
                      <GroupDash />
                      <Icon name={g.shut ? 'folderShut' : 'folder'} />
                      <GroupLabel>{g.name}</GroupLabel>
                    </TreeRow>
                    {g.items.map(([icon, label], i) => (
                      <TreeRow key={i}>
                        <Rails $end={gi < 4 && i === g.items.length - 1} />
                        <LeafLabel $on={icon === 'brick'}><Icon name={icon} />{label}</LeafLabel>
                      </TreeRow>
                    ))}
                  </React.Fragment>
                ))}
              </TreeList>
              <ScrollTrack $v><Chevron dir="up" /><ScrollThumb $v /><Spacer /><Chevron /></ScrollTrack>
            </TreeBody>
            <ScrollTrack><Chevron dir="left" /><ScrollThumb /><Chevron dir="right" /></ScrollTrack>
          </TreeFrame>
          <NavButton>单构件输入</NavButton>
          <NavButton>报表预览</NavButton>
        </Sidebar>

        <Work>
          <EditBar>
            <Tool icon="create" label="新建" drop="menu" /><Tool icon="remove" label="删除" /><Tool icon="copy" label="复制" /><Tool icon="rename" label="重命名" />
            <FloorLabel>楼层</FloorLabel>
            <FloorPicker><BareSelect aria-label="楼层"><option>首层</option></BareSelect><Caret /></FloorPicker>
            <Rule /><Tool icon="sort" label="排序" drop="menu" /><Tool icon="filter" label="过滤" drop="menu" /><Rule />
            <Tool icon="fromFloor" label="从其他楼层复制构件" /><Tool icon="toFloor" label="复制构件到其他楼层" /><Rule />
            <Tool label="查找" drop="menu" /><Rule /><Tool icon="up" label="上移" off /><Tool icon="down" label="下移" />
          </EditBar>
          <Panes>
            <ComponentPane>
              <SearchRow>
                <SearchBox type="text" aria-label="搜索构件" placeholder="搜索构件..." />
                <SearchButton aria-label="搜索"><Icon name="search" size={14} /></SearchButton>
              </SearchRow>
              <ComponentTree>
                <TreeRow><Twisty aria-label="砌体墙"><Chevron /></Twisty><GroupDash /><Icon name="brick" /><GroupLabel>砌体墙</GroupLabel></TreeRow>
                {[1, 2, 3, 4, 5].map(n => (
                  <TreeRow key={n}><ComponentRails $end={n === 5} /><ComponentName $on={n === 1}><Icon name="gear" size={13} />QTQ-{n}</ComponentName></TreeRow>
                ))}
              </ComponentTree>
            </ComponentPane>
            <EditorPane>
              <TabStrip><Tab>属性编辑</Tab></TabStrip>
              <EditorBody><GridFrame><PropertyGrid /></GridFrame></EditorBody>
            </EditorPane>
          </Panes>
        </Work>
      </Main>

      <StatusBar>
        <StatusCell $w={148} /><StatusCell $w={78}>层高:4.5m</StatusCell><StatusCell $w={98}>底标高:-0.03m</StatusCell>
        <StatusCell $w={48}>0</StatusCell><StatusCell>在此设置墙的计算规则</StatusCell><StatusCell $w={70}>159.4 FPS</StatusCell>
      </StatusBar>

      <Taskbar>
        <StartButton aria-label="开始"><svg width="16" height="16" fill="#fff"><path d="M0 2.300 6.700 1.300v6.200H0zM7.500 1.200 16 0v7.500H7.500zM0 8.300h6.700v6.300L0 13.700zM7.500 8.300H16V16l-8.500-1.200z" /></svg></StartButton>
        <TaskSearch>
          <svg width="22" height="22" fill="none"><circle cx="11" cy="11" r="9.300" stroke="#fff" strokeWidth="2.400" /></svg>
          <TaskSearchInput type="text" placeholder="在这里输入你要搜索的内容" aria-label="搜索" />
          <svg width="14" height="18" fill="none" stroke="#b0b0b0"><rect x="4.500" y=".5" width="5" height="11" rx="2" /><path d="M1.500 8v5.500h11V8M7 14v3M4 17.500h6" /></svg>
        </TaskSearch>
        <TaskButton aria-label="任务视图">{taskIcons.view}</TaskButton>
        <TaskButton aria-label="360">{taskIcons.pinwheel}</TaskButton>
        <TaskButton aria-label="广联达G+">{taskIcons.swirl}</TaskButton>
        <TaskButton $w={60} aria-label="Edge">{taskIcons.edge}</TaskButton>
        <TaskButton $w={38} aria-label="应用商店">{taskIcons.store}</TaskButton>
        <TaskButton $w={60} aria-label="文件资源管理器">{taskIcons.explorer}</TaskButton>
        <TaskButton $w={38} aria-label="Internet Explorer">{taskIcons.ie}</TaskButton>
        <TaskButton $w={58} $state="run" aria-label="广联达">{taskIcons.blueG}</TaskButton>
        <TaskButton $w={44} $state="run" aria-label="浏览器">{taskIcons.greenE}</TaskButton>
        <TaskButton $w={52} $state="on" aria-label="钢筋算量"><Icon name="app" size={24} /></TaskButton>
        <TaskButton $w={46} $state="run" aria-label="笔记">{taskIcons.notes}</TaskButton>
        <Tray>
          <TrayButton aria-label="显示隐藏的图标"><svg width="13" height="8" fill="none" stroke="#fff"><path d="m1 7 5.500-5.500L12 7" strokeWidth="1.400" /></svg></TrayButton>
          <TrayButton aria-label="电池"><svg width="17" height="13" fill="none" stroke="#fff"><path d="M5.500 4.500h9v7h-9zM15.500 6.500v3M3.500 6v3c0 1 1 1 1.500 1M1.500 3v2.500h4V3M2.500 0v3M4.500 0v3" /><path d="M7 6h6v4H7z" fill="#fff" /></svg></TrayButton>
          <TrayButton aria-label="网络"><svg width="14" height="14" fill="none" stroke="#cfcfcf"><path d="M1 13C1 6 6 1 13 1M4 13c0-5 4-9 9-9M7 13c0-3 3-6 6-6M10 13c0-2 1-3 3-3" /><circle cx="12" cy="12.500" r="1" fill="#fff" /></svg></TrayButton>
          <TrayButton $w={23} aria-label="音量"><svg width="17" height="14" fill="none" stroke="#fff"><path d="M.5 4.500h3l4-4v13l-4-4h-3zM9.500 4.500c1.500 1.500 1.500 3.500 0 5M11.500 2.500c2.500 3 2.500 6 0 9M13.500 1c3 4 3 8 0 12" /></svg></TrayButton>
          <TrayButton $w={30} aria-label="键盘"><svg width="23" height="14" fill="none" stroke="#fff"><path d="M.5.5h22v12H.5z" /><path d="M3 4.500h17M3 7.500h17" strokeDasharray="2 1" /><path d="M6 10.500h11" /></svg></TrayButton>
          <TrayButton>中</TrayButton>
          <TrayButton $w={33} aria-label="搜狗输入法"><SogouLogo size={16} /></TrayButton>
          <Clock>19:04<br />2017/11/2</Clock>
          <TrayButton $w={42} aria-label="通知">
            <svg width="24" height="26" viewBox="0 0 24 26"><path d="M2 2h16v14h-8l-4 4v-4H2z" fill="#fff" /><path d="M5 6h10M5 9h10M5 12h7" stroke="#111" /><circle cx="16" cy="18" r="7.500" fill="#222" stroke="#999" /><text x="16" y="22" fill="#fff" fontSize="12" fontWeight="bold" textAnchor="middle">2</text></svg>
          </TrayButton>
        </Tray>
      </Taskbar>

      <SettingsDialog />
      <RedRing width="477" height="76" viewBox="0 0 477 76" fill="none" aria-hidden="true">
        <ellipse cx="238" cy="37.500" rx="234" ry="33" stroke="#fe0000" strokeWidth="7" />
      </RedRing>
    </Screen>
  );
}
